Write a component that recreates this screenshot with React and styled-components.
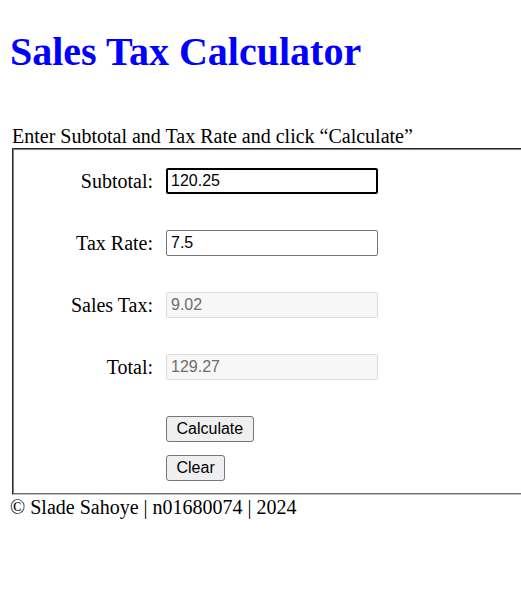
import React from "react";
import styled, { createGlobalStyle } from "styled-components";

const GlobalStyle = createGlobalStyle`
  html, body {
    margin: 0;
    padding: 0;
    background: #ffffff;
    overflow: hidden;
  }
  body {
    padding: 8px;
    font-family: "Liberation Serif", "Times New Roman", serif;
    color: #000;
  }
`;

const Title = styled.h1`
  margin: 21px 0 0 2px;
  font-size: 40px;
  line-height: 46px;
  font-weight: bold;
  color: #0000ff;
`;

const Form = styled.form`
  margin: 49px 0 0 4px;
  width: 560px;
`;

const Caption = styled.div`
  font-size: 20px;
  line-height: 24px;
`;

const Box = styled.div`
  border: 2px groove #c0c0c0;
  border-left-color: #808080;
  border-top-color: #808080;
  padding: 18px 0 12px 0;
  display: flex;
  flex-direction: column;
  gap: 36px;
`;

const Row = styled.div`
  display: flex;
  align-items: center;
  height: 26px;
`;

const Label = styled.label`
  width: 139px;
  margin-right: 13px;
  text-align: right;
  font-size: 20px;
`;

const Field = styled.input`
  box-sizing: border-box;
  width: 212px;
  height: 26px;
  font-family: "Liberation Sans", Arial, sans-serif;
  font-size: 16px;
  color: ${(p) => (p.disabled ? "#6d6d6d" : "#000")};
  background: ${(p) => (p.disabled ? "#f7f7f7" : "#fff")};
  border: ${(p) => (p.$focused ? "2px solid #000" : p.disabled ? "1px solid #dcdcdc" : "1px solid #767676")};
  border-radius: 2px;
  outline: none;
  padding: 0 4px 0 ${(p) => (p.$focused ? "3px" : "4px")};
`;

const Buttons = styled.div`
  display: flex;
  flex-direction: column;
  align-items: flex-start;
  gap: 13px;
  margin-left: 152px;
`;

const Button = styled.button`
  height: 26px;
  padding: 0 9.5px;
  font-family: "Liberation Sans", Arial, sans-serif;
  font-size: 16px;
  color: #000;
  background: #efefef;
  border: 1px solid #767676;
  border-radius: 3px;
`;

const Footer = styled.footer`
  margin: 1px 0 0 2px;
  font-size: 20px;
  line-height: 23px;
`;

const App = () => {
  const rows = [
    { label: "Subtotal:", value: "120.25", focused: true },
    { label: "Tax Rate:", value: "7.5" },
    { label: "Sales Tax:", value: "9.02", disabled: true },
    { label: "Total:", value: "129.27", disabled: true },
  ];
  return (
    <>
      <GlobalStyle />
      <Title>Sales Tax Calculator</Title>
      <Form onSubmit={(e) => e.preventDefault()}>
        <Caption>Enter Subtotal and Tax Rate and click “Calculate”</Caption>
        <Box>
          {rows.map((row) => (
            <Row key={row.label}>
              <Label>{row.label}</Label>
              <Field
                type="text"
                defaultValue={row.value}
                disabled={row.disabled}
                $focused={row.focused}
              />
            </Row>
          ))}
          <Buttons>
            <Button type="button">Calculate</Button>
            <Button type="button">Clear</Button>
          </Buttons>
        </Box>
      </Form>
      <Footer>© Slade Sahoye | n01680074 | 2024</Footer>
    </>
  );
};

export default App;
